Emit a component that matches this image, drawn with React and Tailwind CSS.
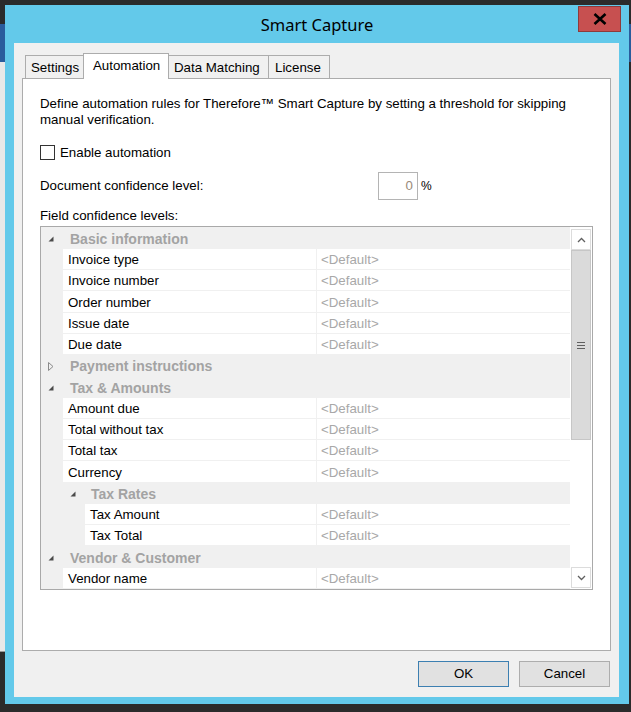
import React from "react";

const rows = [
  { t: "cat", label: "Basic information", open: true, lvl: 0 },
  { t: "p", label: "Invoice type", lvl: 1 },
  { t: "p", label: "Invoice number", lvl: 1 },
  { t: "p", label: "Order number", lvl: 1 },
  { t: "p", label: "Issue date", lvl: 1 },
  { t: "p", label: "Due date", lvl: 1 },
  { t: "cat", label: "Payment instructions", open: false, lvl: 0 },
  { t: "cat", label: "Tax & Amounts", open: true, lvl: 0 },
  { t: "p", label: "Amount due", lvl: 1 },
  { t: "p", label: "Total without tax", lvl: 1 },
  { t: "p", label: "Total tax", lvl: 1 },
  { t: "p", label: "Currency", lvl: 1 },
  { t: "cat", label: "Tax Rates", open: true, lvl: 1 },
  { t: "p", label: "Tax Amount", lvl: 2 },
  { t: "p", label: "Tax Total", lvl: 2 },
  { t: "cat", label: "Vendor & Customer", open: true, lvl: 0 },
  { t: "p", label: "Vendor name", lvl: 1 },
];

function Expanded() {
  return (
    <svg width="6" height="6" viewBox="0 0 6 6" className="block">
      <polygon points="5.5,0.5 5.5,5.5 0.5,5.5" fill="#4a4a4a" />
    </svg>
  );
}

function Collapsed() {
  return (
    <svg width="6" height="9" viewBox="0 0 6 9" className="block">
      <polygon points="0.5,0.5 5,4.5 0.5,8.5" fill="none" stroke="#8a8a8a" strokeWidth="1" />
    </svg>
  );
}

function Row({ r, i }) {
  const h = i % 4 === 3 ? "h-[22px]" : "h-[21px]";
  if (r.t === "cat") {
    return (
      <div className={`${h} flex items-center bg-[#f0f0f0] pt-px`}>
        <div className={r.lvl === 0 ? "w-[29px] flex justify-start pl-[7px]" : "w-[50px] flex justify-start pl-[29px]"}>
          {r.open ? <Expanded /> : <Collapsed />}
        </div>
        <span className="font-bold text-[14px] text-[#a3a3a3] leading-none">{r.label}</span>
      </div>
    );
  }
  return (
    <div className={`${h} flex pb-px bg-[#f0f0f0]`}>
      <div className={r.lvl === 1 ? "w-[22px] shrink-0" : "w-[44px] shrink-0"} />
      <div className="flex-1 bg-white flex items-center pl-[5px] pt-[2px] text-black">{r.label}</div>
      <div className="w-px shrink-0" />
      <div className="w-[253px] shrink-0 bg-white flex items-center pl-[4px] pt-[2px] text-[#a8a8a8]">&lt;Default&gt;</div>
    </div>
  );
}

export default function App() {
  return (
    <div
      className="w-[631px] h-[712px] bg-[#2b2b2b] flex overflow-hidden text-[13.3px]"
      style={{ fontFamily: '"Liberation Sans", Arial, sans-serif' }}
    >
      {/* left background strip */}
      <div className="w-[5px] shrink-0 flex flex-col">
        <div className="h-[24px] bg-[#2b2b2b]" />
        <div className="h-[38px] bg-[#2a5c9c]" />
        <div className="h-[590px] bg-[#e8e8e8] border-b border-[#9a9a9a]" />
      </div>

      {/* window */}
      <div className="mt-[5px] w-[624px] h-[699px] shrink-0 bg-[#63c9ea] flex flex-col">
        <div className="h-[38px] relative flex items-center justify-center">
          <span
            className="text-[16.5px] text-black pt-[2px]"
            style={{ fontFamily: '"Noto Sans", "Open Sans", sans-serif' }}
          >
            Smart Capture
          </span>
          <div className="absolute right-[8px] top-[1px] w-[43px] h-[26px] bg-[#c75050] border border-[#8e3a3a] flex items-center justify-center">
            <svg width="14" height="12" viewBox="0 0 14 12">
              <path d="M1.5 1 L12.5 11 M12.5 1 L1.5 11" stroke="#000" strokeWidth="2.6" strokeLinecap="butt" />
            </svg>
          </div>
        </div>

        {/* client */}
        <div className="ml-[9px] w-[605px] h-[654px] bg-[#f0f0f0] flex flex-col">
          {/* tabs */}
          <div className="mt-[10px] ml-[11px] h-[25px] flex items-end relative z-10">
            <div className="w-[59px] h-[23px] bg-[#f0f0f0] border border-b-0 border-[#acacac] pl-[5px] pt-px flex items-center">Settings</div>
            <div className="w-[86px] h-[26px] -mb-px -ml-px bg-white border border-b-0 border-[#acacac] pl-[9px] flex items-start">
              <span className="mt-[2px]">Automation</span>
            </div>
            <div className="w-[101px] h-[23px] -ml-px bg-[#f0f0f0] border border-b-0 border-[#acacac] pl-[5px] pt-px flex items-center">Data Matching</div>
            <div className="w-[62px] h-[23px] -ml-px bg-[#f0f0f0] border border-b-0 border-[#acacac] pl-[6px] pt-px flex items-center">License</div>
          </div>

          {/* panel */}
          <div className="ml-[8px] w-[589px] h-[573px] bg-white border border-[#acacac] flex flex-col pl-[17px]">
            <p className="mt-[17px] leading-[15.5px] text-black">
              Define automation rules for Therefore™ Smart Capture by setting a threshold for skipping
              <br />
              manual verification.
            </p>

            <div className="mt-[18px] h-[15px] flex items-center">
              <div className="w-[15px] h-[15px] border border-[#333] bg-white" />
              <span className="ml-[5px] leading-[16px] pt-px">Enable automation</span>
            </div>

            <div className="mt-[12px] h-[28px] flex items-center">
              <span className="w-[338px] leading-[16px]">Document confidence level:</span>
              <div className="w-[40px] h-[28px] border border-[#b4b4b4] bg-white flex items-center justify-end pr-[4px] text-[#9a8a7a]">0</div>
              <span className="ml-[3px] text-[12px]">%</span>
            </div>

            <div className="mt-[8px] leading-[16px]">Field confidence levels:</div>

            {/* property grid */}
            <div className="mt-[2px] w-[553px] h-[364px] border border-[#a9a9a9] bg-[#f0f0f0] flex overflow-hidden">
              <div className="w-[529px] shrink-0 pt-px flex flex-col">
                {rows.map((r, i) => (
                  <Row key={i} r={r} i={i} />
                ))}
              </div>
              {/* scrollbar */}
              <div className="w-[22px] shrink-0 pt-[2px] pb-px flex flex-col bg-white">
                <div className="h-[21px] mx-px border border-[#dcdcdc] bg-white flex items-center justify-center">
                  <svg width="9" height="6" viewBox="0 0 9 6">
                    <polyline points="1,5 4.5,1.5 8,5" fill="none" stroke="#606060" strokeWidth="1.3" />
                  </svg>
                </div>
                <div className="h-[190px] mx-px bg-[#dadada] border border-[#c6c6c6] flex items-center justify-center">
                  <svg width="8" height="7" viewBox="0 0 8 7">
                    <path d="M0 0.5 H8 M0 3.5 H8 M0 6.5 H8" stroke="#606060" strokeWidth="1" />
                  </svg>
                </div>
                <div className="flex-1" />
                <div className="h-[21px] mx-px border border-[#dcdcdc] bg-white flex items-center justify-center">
                  <svg width="9" height="6" viewBox="0 0 9 6">
                    <polyline points="1,1 4.5,4.5 8,1" fill="none" stroke="#606060" strokeWidth="1.3" />
                  </svg>
                </div>
              </div>
            </div>
          </div>

          {/* buttons */}
          <div className="mt-[10px] mr-[9px] flex justify-end gap-[10px]">
            <button className="w-[91px] h-[26px] bg-[#e1e1e1] border border-[#3c7fb1] text-black">OK</button>
            <button className="w-[91px] h-[26px] bg-[#e1e1e1] border border-[#adadad] text-black">Cancel</button>
          </div>
        </div>
      </div>

      {/* right background strip */}
      <div className="w-[2px] shrink-0 flex flex-col">
        <div className="h-[24px] bg-[#2b2b2b]" />
        <div className="h-[38px] bg-[#2a5c9c]" />
      </div>
    </div>
  );
}
